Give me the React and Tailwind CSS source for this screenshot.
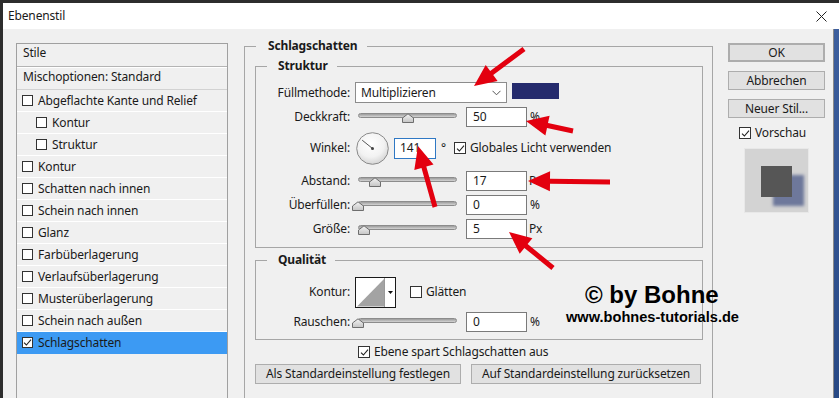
import React, { useId } from "react";

function Check({ checked, small }) {
  return (
    <span
      className={
        "inline-flex items-center justify-center shrink-0 bg-white border border-[#333333] " +
        (small ? "w-[11px] h-[11px]" : "w-[12px] h-[12px]")
      }
    >
      {checked && (
        <svg width="9" height="9" viewBox="0 0 9 9">
          <path d="M1 4.6 L3.4 7 L8 1.6" fill="none" stroke="#222" strokeWidth="1.1" />
        </svg>
      )}
    </span>
  );
}

function Slider({ pos }) {
  const id = useId();
  return (
    <div className="relative ml-[8px] w-[99px] h-[20px] shrink-0">
      <div className="mt-[6px] w-full h-[5px] rounded-full border border-[#8c8c8c] bg-gradient-to-b from-[#9c9c9c] to-[#d4d4d4]" />
      <svg
        className="absolute top-[6px]"
        style={{ left: pos - 6 }}
        width="12"
        height="10"
        viewBox="0 0 12 10"
      >
        <defs>
          <linearGradient id={id} x1="0" y1="0" x2="0" y2="1">
            <stop offset="0" stopColor="#f4f4f4" />
            <stop offset="1" stopColor="#c4c4c4" />
          </linearGradient>
        </defs>
        <path d="M0.5 9.5 V5 L6 0.8 L11.5 5 V9.5 Z" fill={`url(#${id})`} stroke="#6e6e6e" />
      </svg>
    </div>
  );
}

function Field({ value }) {
  return (
    <div className="ml-[9px] w-[61px] h-[20px] shrink-0 bg-white border border-[#7a7a7a] flex items-center pl-[6px]">
      {value}
    </div>
  );
}

function Label({ children }) {
  return <div className="w-[94px] shrink-0 text-right">{children}</div>;
}

function GroupHead({ title, seg, pad }) {
  return (
    <div className="flex h-[16px]">
      <div className={"mt-[8px] border-l border-t border-[#a6a6a6] " + seg} />
      <div className={"font-bold leading-[16px] text-[#1a1a1a] " + pad}>{title}</div>
      <div className="flex-1 mt-[8px] border-r border-t border-[#a6a6a6]" />
    </div>
  );
}

function Btn({ children, className }) {
  return (
    <div
      className={
        "h-[19px] shrink-0 bg-[#e1e1e1] border border-[#adadad] flex items-center justify-center leading-[16px] " +
        className
      }
    >
      {children}
    </div>
  );
}

const items = [
  ["Abgeflachte Kante und Relief", 0],
  ["Kontur", 1],
  ["Struktur", 1],
  ["Kontur", 0],
  ["Schatten nach innen", 0],
  ["Schein nach innen", 0],
  ["Glanz", 0],
  ["Farbüberlagerung", 0],
  ["Verlaufsüberlagerung", 0],
  ["Musterüberlagerung", 0],
  ["Schein nach außen", 0],
  ["Schlagschatten", 0, true],
];

function arrow(tx, ty, px, py, w = 5, L = 22, W = 20) {
  const dx = px - tx;
  const dy = py - ty;
  const len = Math.hypot(dx, dy);
  const ux = dx / len;
  const uy = dy / len;
  const nx = -uy;
  const ny = ux;
  const bx = px - ux * L;
  const by = py - uy * L;
  const pts = [
    [tx + (nx * w) / 2, ty + (ny * w) / 2],
    [bx + (nx * w) / 2, by + (ny * w) / 2],
    [bx + (nx * W) / 2, by + (ny * W) / 2],
    [px, py],
    [bx - (nx * W) / 2, by - (ny * W) / 2],
    [bx - (nx * w) / 2, by - (ny * w) / 2],
    [tx - (nx * w) / 2, ty - (ny * w) / 2],
  ];
  return pts.map((p) => p[0].toFixed(1) + "," + p[1].toFixed(1)).join(" ");
}

const arrows = [
  [524, 49, 474, 86],
  [573, 131, 526, 121],
  [435, 207, 418, 146],
  [610, 182, 528, 181],
  [553, 268, 509, 232],
];

export default function App() {
  return (
    <div className="relative w-[839px] h-[398px] overflow-hidden bg-[#f0f0f0] text-[12px] tracking-[-0.15px] text-[#1a1a1a] font-['Noto_Sans',sans-serif]">
      <div className="w-full h-full flex flex-col border-t-[3px] border-l-[3px] border-[#2d2d2d]">
        {/* title bar */}
        <div className="h-[26px] shrink-0 bg-white flex items-center justify-between pl-[5px] pr-[12px]">
          <span className="leading-[16px]">Ebenenstil</span>
          <svg width="11" height="11" viewBox="0 0 11 11">
            <path d="M0.5 0.5 L10.5 10.5 M10.5 0.5 L0.5 10.5" stroke="#222" strokeWidth="1" />
          </svg>
        </div>

        <div className="flex-1 min-h-0 flex">
          <div className="flex-1 flex items-start pl-[13px]">
            {/* left styles list */}
            <div className="mt-[14px] w-[212px] h-[360px] shrink-0 border border-[#a0a0a0] flex flex-col">
              <div className="h-[23px] pl-[6px] pt-[1px] leading-[16px] border-b border-[#b4b4b4]">Stile</div>
              <div className="h-[23px] pl-[6px] pt-[1px] leading-[16px] border-t border-white border-b border-b-[#d2d2d2]">
                Mischoptionen: Standard
              </div>
              {items.map(([label, sub, sel], i) => (
                <div
                  key={i}
                  className={
                    "h-[22px] flex items-center gap-[5px] leading-[16px] border-b " +
                    (sub ? "pl-[19px] " : "pl-[5px] ") +
                    (sel ? "bg-[#3c9af3] border-[#3c9af3]" : "border-white")
                  }
                >
                  <Check small checked={!!sel} />
                  <span>{label}</span>
                </div>
              ))}
            </div>

            {/* main group */}
            <div className="ml-[16px] mt-[9px] w-[469px] shrink-0 flex flex-col">
              <GroupHead title="Schlagschatten" seg="w-[12px]" pad="pl-[12px] pr-[10px]" />
              <div className="h-[360px] border-l border-r border-[#a6a6a6] pl-[10px] pr-[9px] pt-[4px]">
                {/* Struktur */}
                <GroupHead title="Struktur" seg="w-[12px]" pad="pl-[11px] pr-[9px]" />
                <div className="border-l border-r border-b border-[#a6a6a6] pt-[8px] pb-[8px]">
                  <div className="h-[21px] flex items-center">
                    <Label>Füllmethode:</Label>
                    <div className="ml-[5px] w-[152px] h-[21px] bg-white border border-[#8c8c8c] flex items-center justify-between pl-[5px] pr-[5px]">
                      <span>Multiplizieren</span>
                      <svg width="9" height="6" viewBox="0 0 9 6">
                        <path d="M0.5 0.8 L4.5 4.8 L8.5 0.8" fill="none" stroke="#555" strokeWidth="1" />
                      </svg>
                    </div>
                    <div className="ml-[5px] self-start mt-[1px] w-[47px] h-[16px] bg-[#252b6d]" />
                  </div>
                  <div className="mt-[4px] h-[20px] flex items-center">
                    <Label>Deckkraft:</Label>
                    <Slider pos={50} />
                    <Field value="50" />
                    <span className="ml-[3px]">%</span>
                  </div>
                  <div className="mt-[5px] h-[32px] flex items-center">
                    <Label>Winkel:</Label>
                    <svg className="ml-[6px] shrink-0" width="33" height="33" viewBox="0 0 33 33">
                      <defs>
                        <radialGradient id="dial" cx="0.45" cy="0.35" r="0.7">
                          <stop offset="0" stopColor="#ffffff" />
                          <stop offset="0.6" stopColor="#f2f2f2" />
                          <stop offset="1" stopColor="#cfcfcf" />
                        </radialGradient>
                      </defs>
                      <circle cx="16.5" cy="16.5" r="15.8" fill="url(#dial)" stroke="#8a8a8a" />
                      <line x1="16.5" y1="16.5" x2="6.2" y2="8.2" stroke="#555" strokeWidth="1" />
                      <circle cx="16.5" cy="16.5" r="1.5" fill="#444" />
                    </svg>
                    <div className="ml-[5px] w-[42px] h-[21px] bg-white border border-[#2f78c4] flex items-center pl-[5px] shrink-0">
                      141
                    </div>
                    <span className="ml-[5px] self-start mt-[10px] leading-[12px]">°</span>
                    <div className="ml-[8px] flex items-center gap-[4px]">
                      <Check checked />
                      <span>Globales Licht verwenden</span>
                    </div>
                  </div>
                  <div className="mt-[7px] h-[20px] flex items-center">
                    <Label>Abstand:</Label>
                    <Slider pos={17} />
                    <Field value="17" />
                    <span className="ml-[2px]">Px</span>
                  </div>
                  <div className="mt-[4px] h-[20px] flex items-center">
                    <Label>Überfüllen:</Label>
                    <Slider pos={0} />
                    <Field value="0" />
                    <span className="ml-[3px]">%</span>
                  </div>
                  <div className="mt-[4px] h-[20px] flex items-center">
                    <Label>Größe:</Label>
                    <Slider pos={6} />
                    <Field value="5" />
                    <span className="ml-[2px]">Px</span>
                  </div>
                </div>

                {/* Qualität */}
                <div className="mt-[4px]">
                  <GroupHead title="Qualität" seg="w-[12px]" pad="pl-[11px] pr-[9px]" />
                  <div className="border-l border-r border-b border-[#a6a6a6] pt-[9px] pb-[7px]">
                    <div className="h-[30px] flex items-center">
                      <Label>Kontur:</Label>
                      <svg className="ml-[5px] shrink-0" width="41" height="31" viewBox="0 0 41 31">
                        <rect x="0.5" y="0.5" width="40" height="30" fill="#ffffff" stroke="#1a1a1a" />
                        <polygon points="2,29.5 29,2 29,29.5" fill="#a3a3a3" />
                        <line x1="29.5" y1="1" x2="29.5" y2="30" stroke="#9a9a9a" />
                        <polygon points="33,14 38,14 35.5,17" fill="#111111" />
                      </svg>
                      <div className="ml-[14px] flex items-center gap-[4px]">
                        <Check />
                        <span>Glätten</span>
                      </div>
                    </div>
                    <div className="mt-[5px] h-[20px] flex items-center">
                      <Label>Rauschen:</Label>
                      <Slider pos={0} />
                      <Field value="0" />
                      <span className="ml-[3px]">%</span>
                    </div>
                  </div>
                </div>

                <div className="mt-[5px] h-[14px] flex items-center gap-[4px] ml-[103px]">
                  <Check checked />
                  <span>Ebene spart Schlagschatten aus</span>
                </div>
                <div className="mt-[5px] flex gap-[10px]">
                  <Btn className="w-[206px] h-[20px]">Als Standardeinstellung festlegen</Btn>
                  <Btn className="w-[230px] h-[20px]">Auf Standardeinstellung zurücksetzen</Btn>
                </div>
              </div>
            </div>

            {/* right column */}
            <div className="ml-[15px] mt-[14px] w-[97px] shrink-0 flex flex-col">
              <Btn className="border-2 border-[#1f78d1]">OK</Btn>
              <Btn className="mt-[9px]">Abbrechen</Btn>
              <Btn className="mt-[9px]">Neuer Stil...</Btn>
              <div className="mt-[8px] h-[14px] pl-[11px] flex items-center gap-[4px]">
                <Check checked />
                <span>Vorschau</span>
              </div>
              <div className="mt-[8px] ml-[16px] w-[65px] h-[65px] bg-[#d3d3d3] border border-[#e8e8e8] pt-[17px] pl-[16px]">
                <div className="w-[31px] h-[31px] bg-[#565656] shadow-[12px_9px_3px_0px_#6e789b]" />
              </div>
            </div>
          </div>
          <div className="w-[6px] shrink-0 border-l border-[#8a8a8a] bg-gradient-to-b from-[#3d5f9e] to-[#284985]" />
        </div>
      </div>

      {/* watermark */}
      <div className="absolute left-[585px] top-[283px] font-['Liberation_Sans',Arial,sans-serif] font-bold text-[24px] leading-[24px] tracking-normal text-black whitespace-nowrap">
        © by Bohne
      </div>
      <div className="absolute left-[566px] top-[310px] font-['Liberation_Sans',Arial,sans-serif] font-bold text-[14.6px] leading-[15px] tracking-normal text-black whitespace-nowrap">
        www.bohnes-tutorials.de
      </div>

      {/* red arrows */}
      <svg className="absolute left-0 top-0 pointer-events-none" width="839" height="398" viewBox="0 0 839 398">
        {arrows.map((a, i) => (
          <polygon key={i} points={arrow(a[0], a[1], a[2], a[3])} fill="#e3000f" />
        ))}
      </svg>
    </div>
  );
}
